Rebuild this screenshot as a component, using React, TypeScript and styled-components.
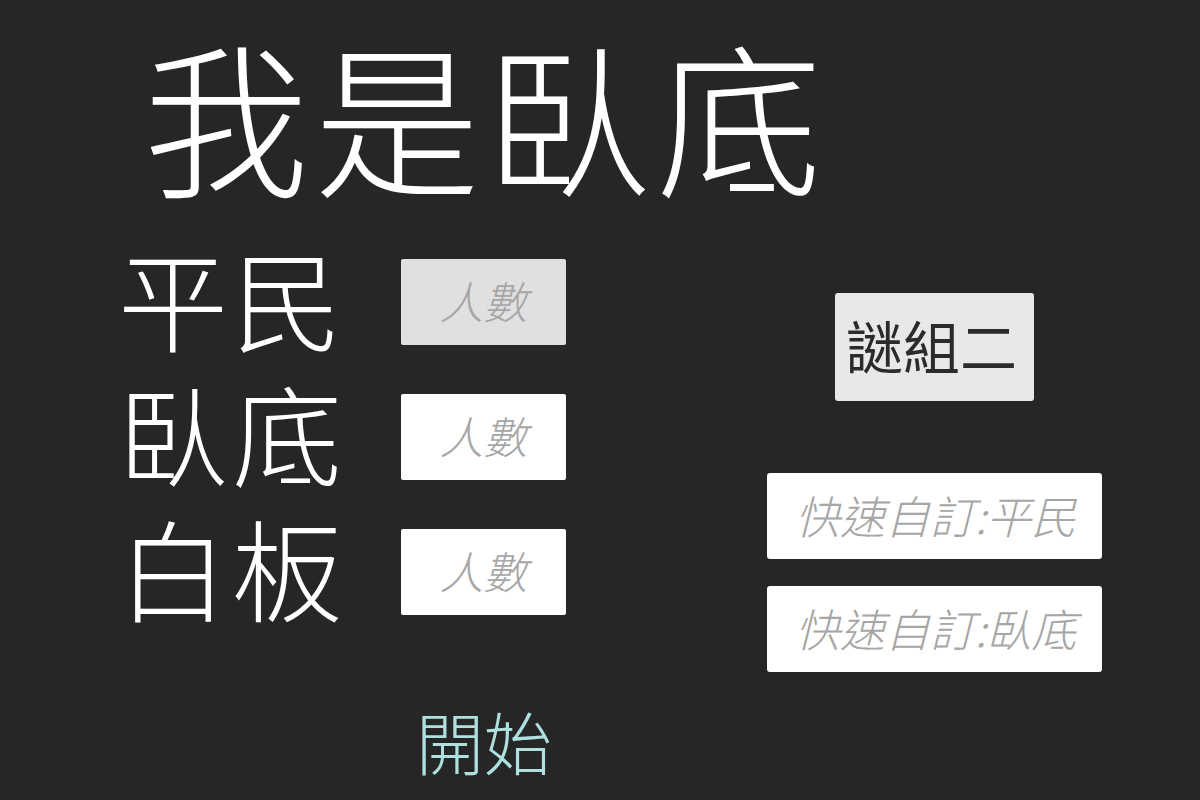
import React from 'react';
import styled, { createGlobalStyle } from 'styled-components';

const GlobalStyle = createGlobalStyle`
  html, body {
    margin: 0;
    padding: 0;
    background: #262626;
  }
  body {
    font-family: 'Noto Sans CJK TC', 'Noto Sans', sans-serif;
  }
`;

const Screen = styled.div`
  width: 1200px;
  height: 800px;
  overflow: hidden;
  background: #262626;
  display: flex;
  flex-direction: column;
`;

const Title = styled.h1`
  margin: 0;
  height: 234px;
  padding: 22px 0 0 143px;
  box-sizing: border-box;
  font-size: 166px;
  line-height: 1.1;
  font-weight: 300;
  color: #ffffff;
  letter-spacing: 5px;
  white-space: nowrap;
`;

const Body = styled.div`
  display: flex;
  flex-direction: row;
`;

const RolesColumn = styled.div`
  display: grid;
  grid-template-columns: 283px 165px;
  grid-auto-rows: 135px;
  align-items: center;
  margin-left: 118px;
`;

const RoleLabel = styled.div`
  font-size: 110px;
  line-height: 1.1;
  font-weight: 300;
  color: #ffffff;
  letter-spacing: 4px;
  white-space: nowrap;
  padding-bottom: 10px;
`;

const CountInput = styled.input<{ $active?: boolean }>`
  width: 165px;
  height: 86px;
  box-sizing: border-box;
  border: none;
  border-radius: 2px;
  outline: none;
  background: ${(p) => (p.$active ? '#e0e0e0' : '#ffffff')};
  font-family: 'Noto Sans CJK TC', sans-serif;
  font-size: 44px;
  font-style: italic;
  font-weight: 300;
  text-align: center;
  padding: 0 0 4px 0;

  &::placeholder {
    color: #a6a6a6;
  }
`;

const SideColumn = styled.div`
  display: flex;
  flex-direction: column;
  align-items: center;
  width: 335px;
  margin-left: auto;
  margin-right: 98px;
  padding-top: 59px;
`;

const PuzzleButton = styled.button`
  width: 199px;
  height: 108px;
  border: none;
  border-radius: 3px;
  background: #e8e8e8;
  color: #2b2b2b;
  font-family: 'Noto Sans CJK TC', sans-serif;
  font-size: 57px;
  font-weight: 400;
  padding: 0 6px 6px 0;
  margin-bottom: 72px;
  white-space: nowrap;
`;

const QuickInput = styled.input`
  width: 335px;
  height: 86px;
  box-sizing: border-box;
  border: none;
  border-radius: 3px;
  outline: none;
  background: #ffffff;
  font-family: 'Noto Sans CJK TC', sans-serif;
  font-size: 45px;
  font-style: italic;
  font-weight: 300;
  padding: 0 0 4px 28px;
  margin-bottom: 27px;

  &::placeholder {
    color: #a6a6a6;
  }
`;

const StartButton = styled.button`
  align-self: flex-start;
  margin: 8px 0 0 416px;
  padding: 0;
  border: none;
  background: transparent;
  color: #aee0e0;
  font-family: 'Noto Sans CJK TC', sans-serif;
  font-size: 68px;
  font-weight: 300;
  line-height: 1;
  white-space: nowrap;
`;

const roles = ['平民', '臥底', '白板'];

export default function App() {
  return (
    <>
      <GlobalStyle />
      <Screen>
        <Title>我是臥底</Title>
        <Body>
          <RolesColumn>
            {roles.map((role, i) => (
              <React.Fragment key={role}>
                <RoleLabel>{role}</RoleLabel>
                <CountInput $active={i === 0} placeholder="人數" />
              </React.Fragment>
            ))}
          </RolesColumn>
          <SideColumn>
            <PuzzleButton type="button">謎組二</PuzzleButton>
            <QuickInput placeholder="快速自訂:平民" />
            <QuickInput placeholder="快速自訂:臥底" />
          </SideColumn>
        </Body>
        <StartButton type="button">開始</StartButton>
      </Screen>
    </>
  );
}
